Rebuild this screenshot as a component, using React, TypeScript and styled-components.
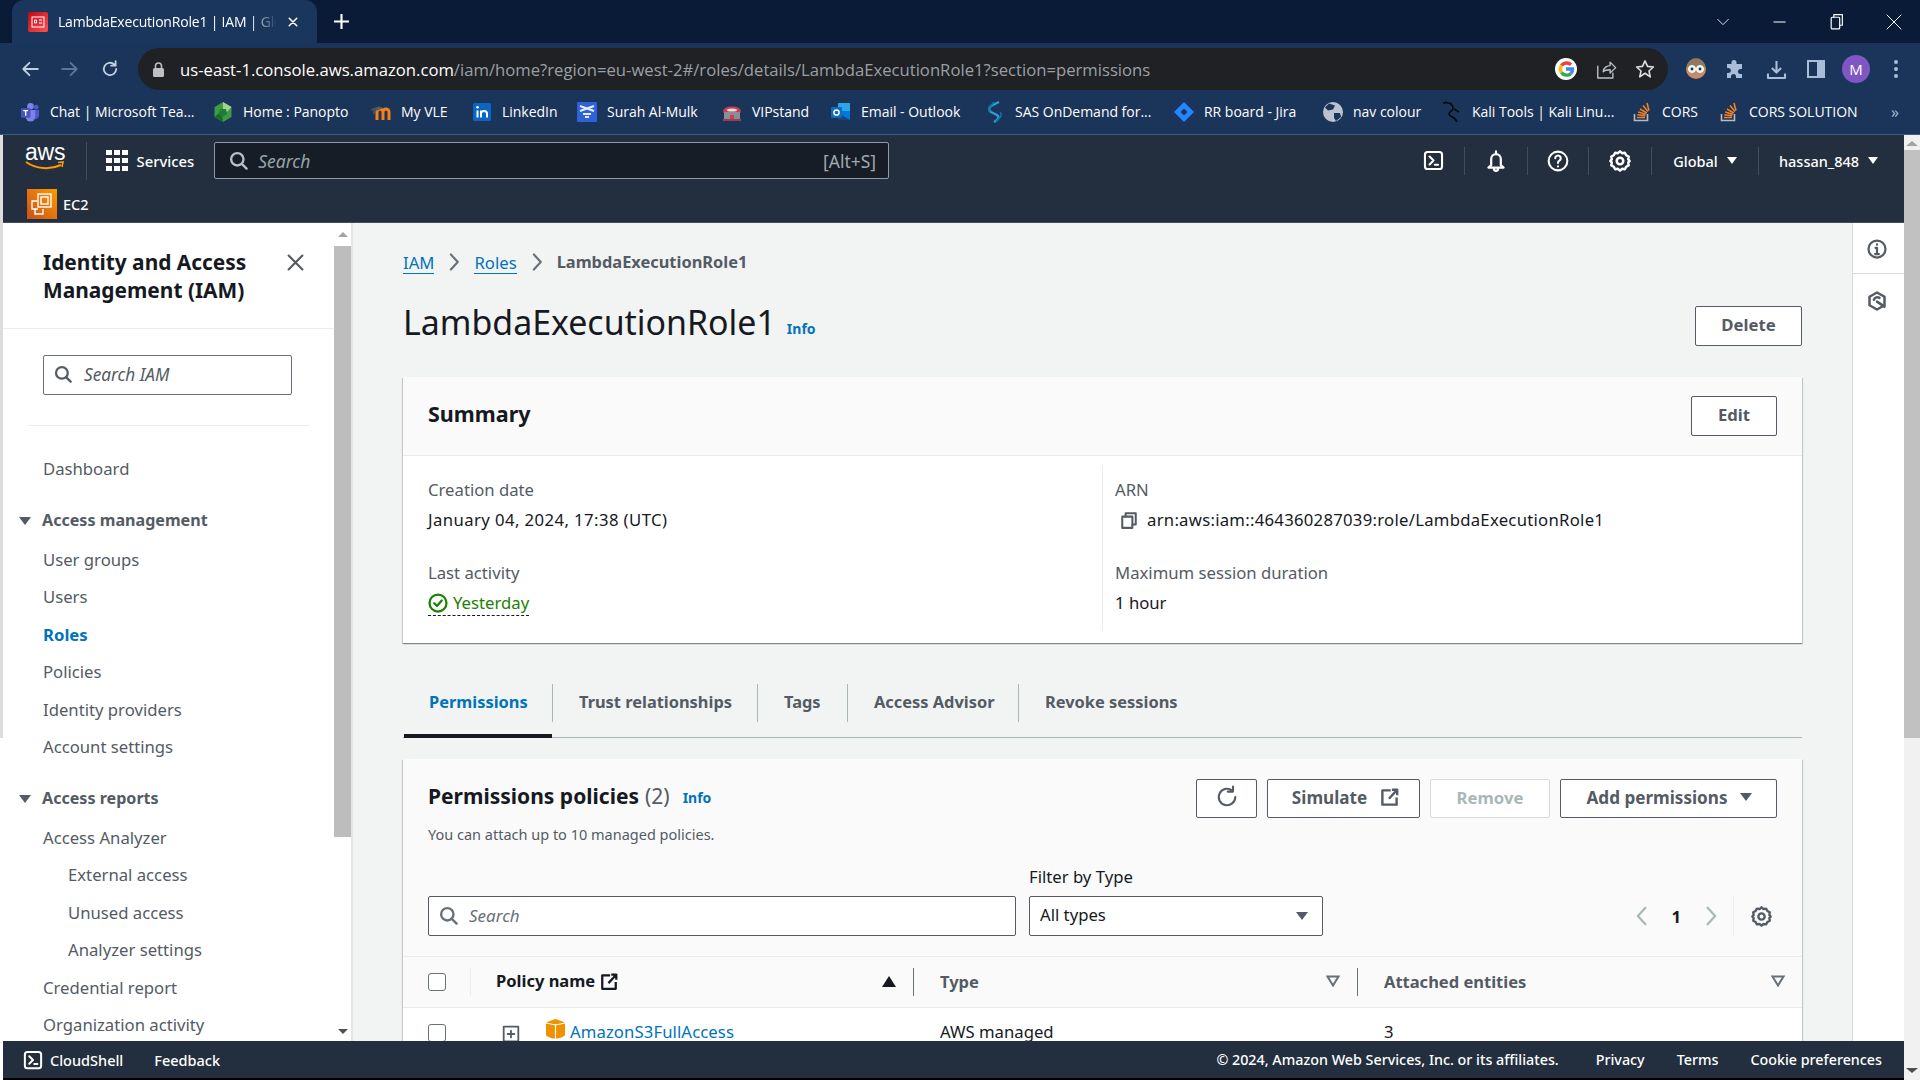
import React from 'react';
import styled, { createGlobalStyle } from 'styled-components';

const GlobalStyle = createGlobalStyle`
  html, body { margin: 0; padding: 0; height: 100%; overflow: hidden; background: #fff; }
  #root { height: 100%; }
  * { box-sizing: border-box; }
  body { font-family: "Noto Sans", "Open Sans", sans-serif; color: #16191f; }
`;

const chromeFont = `"Open Sans", "Noto Sans", sans-serif`;

const Screen = styled.div`
  display: flex;
  flex-direction: column;
  height: 1080px;
  width: 1920px;
  overflow: hidden;
`;

/* ---- browser chrome ---- */
const TabStrip = styled.div`
  height: 43px;
  flex: none;
  background: #0a1b37;
  display: flex;
  align-items: flex-end;
  padding-left: 12px;
  color: #fff;
  font-family: ${chromeFont};
`;
const BrowserTab = styled.div`
  width: 305px;
  height: 43px;
  background: #1a365d;
  border-radius: 12px 12px 0 0;
  display: flex;
  align-items: center;
  padding-left: 16px;
  font-size: 14px;
`;
const Favicon = styled.div`
  width: 20px;
  height: 20px;
  flex: none;
  border-radius: 2px;
  background: linear-gradient(135deg, #bd0816, #ff5252);
  display: flex;
  align-items: center;
  justify-content: center;
`;
const TabTitle = styled.span`
  margin-left: 10px;
  width: 219px;
  white-space: nowrap;
  overflow: hidden;
  letter-spacing: -0.2px;
  -webkit-mask-image: linear-gradient(90deg, #000 88%, transparent);
`;
const TabClose = styled.span`
  display: flex;
  margin-left: 10px;
`;
const NewTab = styled.span`
  display: flex;
  margin: 0 0 13px 16px;
`;
const WindowControls = styled.div`
  margin-left: auto;
  margin-right: -2px;
  display: flex;
  align-self: center;
  align-items: center;
`;
const WindowButton = styled.span`
  width: 57px;
  display: flex;
  justify-content: center;
`;
const Toolbar = styled.div`
  height: 50px;
  flex: none;
  background: #1a3559;
  display: flex;
  align-items: center;
  padding: 2px 0 0 10px;
`;
const NavButton = styled.span<{ $dim?: boolean }>`
  width: 40px;
  display: flex;
  justify-content: center;
  color: ${(p) => (p.$dim ? '#5b7596' : '#c3d0e3')};
`;
const AddressBar = styled.div`
  width: 1530px;
  height: 42px;
  margin-left: 8px;
  border-radius: 21px;
  background: #202124;
  display: flex;
  align-items: center;
  padding: 0 13px 0 15px;
  font-family: ${chromeFont};
  font-size: 16.68px;
  color: #9aa0a6;
`;
const Host = styled.span`
  color: #fff;
`;
const UrlText = styled.span`
  margin-left: 16px;
  white-space: nowrap;
`;
const AddressIcons = styled.div`
  margin-left: auto;
  display: flex;
  align-items: center;
  gap: 18px;
`;
const AddressGlyph = styled.span<{ $c: string }>`
  display: flex;
  color: ${(p) => p.$c};
`;
const ToolIcons = styled.div`
  display: flex;
  align-items: center;
  margin-left: 8px;
`;
const ToolIcon = styled.span`
  width: 40px;
  display: flex;
  justify-content: center;
  color: #a9bcd8;
`;
const Avatar = styled.span`
  width: 28px;
  height: 28px;
  border-radius: 50%;
  background: #7e57c2;
  color: #fff;
  font-size: 15px;
  font-family: ${chromeFont};
  display: flex;
  align-items: center;
  justify-content: center;
`;
const Bookmarks = styled.div`
  height: 42px;
  flex: none;
  background: #1a3559;
  border-bottom: 1px solid #3b5a85;
  display: flex;
  align-items: center;
  padding: 0 0 4px 20px;
  font-family: ${chromeFont};
  font-size: 14px;
  letter-spacing: -0.02px;
  color: #fff;
  white-space: nowrap;
`;
const Bookmark = styled.div<{ $w: number }>`
  width: ${(p) => p.$w}px;
  display: flex;
  align-items: center;
  gap: 10px;
  flex: none;
`;
const BookmarkMark = styled.span`
  width: 20px;
  height: 20px;
  flex: none;
  display: flex;
  align-items: center;
  justify-content: center;
`;
const MoreBookmarks = styled.span`
  color: #a9bcd8;
  font-size: 16px;
  margin-left: 26px;
`;

/* ---- page frame ---- */
const Viewport = styled.div`
  flex: 1;
  min-height: 0;
  display: flex;
`;
const LeftEdge = styled.div`
  width: 3px;
  flex: none;
  background: linear-gradient(#dcdcdc 0 603px, #fff 603px);
`;
const Page = styled.div`
  width: 1901px;
  flex: none;
  display: flex;
  flex-direction: column;
  background: #000;
`;
const PageScroll = styled.div`
  flex: 1;
  background: #f1f1f1;
  display: flex;
  flex-direction: column;
  align-items: center;
`;
const ScrollArrow = styled.span<{ $down?: boolean; $w?: number; $top?: number }>`
  flex: none;
  margin: ${(p) => (p.$down ? 'auto 0 7px' : `${p.$top ?? 6}px 0 0`)};
  border-left: ${(p) => p.$w ?? 5}px solid transparent;
  border-right: ${(p) => p.$w ?? 5}px solid transparent;
  ${(p) => (p.$down ? 'border-top: 5px solid #505050;' : 'border-bottom: 5px solid #a3a3a3;')}
`;
const PageThumb = styled.div`
  width: 100%;
  height: 588px;
  margin-top: 4px;
  background: #c1c1c1;
`;

/* ---- aws header ---- */
const AwsBar = styled.div`
  height: 50px;
  flex: none;
  background: #232f3e;
  display: flex;
  align-items: center;
  padding-top: 1px;
  color: #fff;
  font-size: 14.5px;
  font-weight: 500;
`;
const LogoBox = styled.div`
  width: 84px;
  height: 38px;
  padding-left: 22px;
  border-right: 1px solid #414d5c;
`;
const AwsWord = styled.span`
  display: block;
  font-family: "Liberation Sans", sans-serif;
  font-size: 23px;
  line-height: 24px;
  letter-spacing: -0.2px;
  color: #fff;
  margin-top: -2px;
`;
const Smile = styled.svg`
  display: block;
  margin-top: -4px;
`;
const ServicesButton = styled.div`
  display: flex;
  align-items: center;
  gap: 9px;
  margin-left: 19px;
  font-size: 14.8px;
`;
const DotGrid = styled.div`
  display: grid;
  grid-template-columns: repeat(3, 5.5px);
  gap: 2.5px;
  & > i { height: 5.5px; background: #fff; display: block; }
`;
const GlobalSearch = styled.div`
  width: 675px;
  height: 37px;
  margin-left: 20px;
  background: #161d26;
  border: 1px solid #8d99a8;
  border-radius: 2px;
  display: flex;
  align-items: center;
  padding: 0 12px 0 14px;
  color: #b6bec9;
`;
const SearchHint = styled.span`
  margin-left: 10px;
  font-style: italic;
  font-size: 17.5px;
  font-weight: 400;
  color: #95a5a6;
`;
const Shortcut = styled.span`
  margin-left: auto;
  font-size: 17.5px;
  font-weight: 400;
  color: #a0a8b2;
`;
const HeaderRight = styled.div`
  margin-left: auto;
  display: flex;
  align-items: center;
  padding-right: 6px;
`;
const HeaderCell = styled.div<{ $w: number; $last?: boolean }>`
  width: ${(p) => p.$w}px;
  height: 28px;
  display: flex;
  align-items: center;
  justify-content: center;
  gap: 9px;
  border-right: ${(p) => (p.$last ? 'none' : '1px solid #414d5c')};
`;
const Caret = styled.span<{ $c?: string; $s?: number }>`
  flex: none;
  display: inline-block;
  border-left: ${(p) => p.$s ?? 5}px solid transparent;
  border-right: ${(p) => p.$s ?? 5}px solid transparent;
  border-top: ${(p) => (p.$s ?? 5) + 2}px solid ${(p) => p.$c ?? '#fff'};
`;
const ServiceBar = styled.div`
  height: 38px;
  flex: none;
  background: #232f3e;
  display: flex;
  align-items: center;
  gap: 6px;
  padding: 1px 0 0 24px;
  color: #fff;
  font-size: 14.5px;
  font-weight: 500;
  border-bottom: 1px solid #414d5c;
`;
const Ec2Badge = styled.span`
  width: 30px;
  height: 30px;
  background: linear-gradient(45deg, #c8511b, #ff9900);
  display: flex;
  align-items: center;
  justify-content: center;
`;

/* ---- main area ---- */
const Body = styled.div`
  flex: 1;
  min-height: 0;
  display: flex;
  background: #f2f3f3;
`;
const Sidebar = styled.nav`
  width: 331px;
  flex: none;
  background: #fff;
  overflow: hidden;
`;
const SideHead = styled.div`
  height: 106px;
  padding: 25px 30px 0 40px;
  border-bottom: 1px solid #eaeded;
  display: flex;
  justify-content: space-between;
  align-items: flex-start;
`;
const SideTitle = styled.h2`
  margin: 0;
  font-size: 20.9px;
  line-height: 28px;
  font-weight: 700;
  color: #16191f;
`;
const CloseButton = styled.span`
  display: flex;
  color: #545b64;
  margin-top: 6px;
`;
const SideSearchWrap = styled.div`
  padding: 26px 40px 30px 40px;
  margin: 0 25px 0 0;
`;
const SideSearch = styled.div`
  width: 249px;
  height: 40px;
  border: 1px solid #687078;
  border-radius: 2px;
  display: flex;
  align-items: center;
  gap: 12px;
  padding: 0 0 2px 10px;
  font-size: 17.2px;
  font-style: italic;
  color: #545b64;
`;
const SideRule = styled.div`
  height: 1px;
  margin: 0 25px;
  background: #eaeded;
`;
const SideList = styled.div`
  padding-top: 24px;
`;
const SideItem = styled.div<{ $level?: number; $active?: boolean }>`
  height: 37.5px;
  line-height: 37.5px;
  padding-left: ${(p) => (p.$level === 2 ? 65 : 40)}px;
  font-size: 16.7px;
  white-space: nowrap;
  color: ${(p) => (p.$active ? '#0073bb' : '#545b64')};
  font-weight: ${(p) => (p.$active ? 700 : 400)};
`;
const SideSection = styled.div<{ $mt?: number; $h?: number }>`
  height: ${(p) => p.$h ?? 39}px;
  margin-top: ${(p) => p.$mt ?? 14}px;
  padding: 0 0 1px 16px;
  display: flex;
  align-items: center;
  gap: 11px;
  font-size: 16.1px;
  font-weight: 700;
  color: #545b64;
  line-height: 37.5px;
`;
const SideScroll = styled.div`
  width: 19px;
  flex: none;
  background: #fff;
  border-right: 2px solid #e4e6e6;
  display: flex;
  flex-direction: column;
  align-items: center;
`;
const SideThumb = styled.div`
  width: 17px;
  height: 591px;
  margin-top: 9px;
  background: #bdbdbd;
`;
const Main = styled.main`
  flex: 1;
  min-width: 0;
  overflow: hidden;
  padding: 28px 50px 0;
`;
const Crumbs = styled.div`
  height: 22px;
  display: flex;
  align-items: center;
  font-size: 16.7px;
  line-height: 22px;
  color: #545b64;
`;
const CrumbLink = styled.a`
  color: #0073bb;
  border-bottom: 1px solid #0073bb;
  line-height: 21px;
  margin-top: 1px;
`;
const CrumbSep = styled.span`
  display: flex;
  margin: 0 10px;
  color: #687078;
`;
const CrumbCurrent = styled.span`
  font-weight: 700;
  font-size: 16.4px;
`;
const TitleRow = styled.div`
  height: 40px;
  margin-top: 33px;
  display: flex;
  align-items: flex-start;
`;
const PageTitle = styled.h1`
  margin: -4px 0 0;
  font-size: 33.9px;
  line-height: 40px;
  font-weight: 400;
  color: #16191f;
`;
const InfoLink = styled.a<{ $top: number; $ml?: number }>`
  margin: ${(p) => p.$top}px 0 0 ${(p) => p.$ml ?? 11}px;
  font-size: 14px;
  font-weight: 700;
  line-height: 18px;
  color: #0073bb;
`;
const Button = styled.div<{ $w: number; $h?: number; $off?: boolean; $fs?: number; $pl?: number }>`
  width: ${(p) => p.$w}px;
  height: ${(p) => p.$h ?? 40}px;
  flex: none;
  background: #fff;
  border: 1px solid ${(p) => (p.$off ? '#d5dbdb' : '#545b64')};
  border-radius: 2px;
  display: flex;
  align-items: center;
  justify-content: center;
  gap: 13px;
  padding: 0 0 3px ${(p) => p.$pl ?? 0}px;
  font-size: ${(p) => p.$fs ?? 16.7}px;
  font-weight: 700;
  color: ${(p) => (p.$off ? '#aab7b8' : '#545b64')};
`;
const PushRight = styled.div`
  margin-left: auto;
`;
const Card = styled.section<{ $mt: number }>`
  margin-top: ${(p) => p.$mt}px;
  background: #fff;
  box-shadow: 0 1px 1px 0 rgba(0, 28, 36, 0.3), 1px 1px 1px 0 rgba(0, 28, 36, 0.15), -1px 1px 1px 0 rgba(0, 28, 36, 0.15);
`;
const SummaryHead = styled.div`
  height: 79px;
  background: #fafafa;
  border-bottom: 1px solid #eaeded;
  padding: 0 25px;
  display: flex;
  align-items: center;
  justify-content: space-between;
`;
const CardTitle = styled.h2<{ $mt: number; $fs?: number }>`
  margin: ${(p) => p.$mt}px 0 0;
  font-size: ${(p) => p.$fs ?? 21}px;
  font-weight: 700;
  line-height: 28px;
  color: #16191f;
`;
const SummaryGrid = styled.div`
  height: 187px;
  padding: 9px 0 12px;
  display: grid;
  grid-template-columns: 699px 1fr;
`;
const SummaryColumn = styled.div<{ $ruled?: boolean }>`
  padding: 14px 0 0 ${(p) => (p.$ruled ? 12 : 25)}px;
  border-left: ${(p) => (p.$ruled ? '1px solid #eaeded' : 'none')};
`;
const FieldLabel = styled.div<{ $mt?: number }>`
  margin-top: ${(p) => p.$mt ?? 0}px;
  font-size: 16.7px;
  line-height: 22px;
  color: #545b64;
`;
const FieldValue = styled.div<{ $track?: number }>`
  margin-top: 8px;
  font-size: 16.7px;
  line-height: 22px;
  letter-spacing: ${(p) => p.$track ?? 0}px;
  color: #16191f;
  display: flex;
  align-items: center;
`;
const StatusOk = styled.span`
  display: inline-flex;
  align-items: center;
  gap: 5px;
  height: 25px;
  margin-top: -1px;
  border-bottom: 1.5px dashed #16191f;
  color: #1d8102;
`;
const CopyMark = styled.span`
  display: flex;
  margin: 0 9px 0 5px;
  color: #545b64;
`;
const TabList = styled.div`
  margin-top: 41px;
  height: 54px;
  padding-left: 1px;
  display: flex;
  border-bottom: 1px solid #aab7b8;
  align-items: flex-start;
`;
const TabButton = styled.div<{ $active?: boolean; $last?: boolean; $w: number }>`
  width: ${(p) => p.$w}px;
  height: ${(p) => (p.$active ? 54 : 38)}px;
  flex: none;
  padding-left: ${(p) => (p.$active ? 25 : 26)}px;
  line-height: 36px;
  font-size: 16.4px;
  font-weight: 700;
  white-space: nowrap;
  color: ${(p) => (p.$active ? '#0073bb' : '#545b64')};
  border-right: ${(p) => (p.$last || p.$active ? 'none' : '1px solid #aab7b8')};
  border-bottom: ${(p) => (p.$active ? '4px solid #16191f' : 'none')};
`;
const TabRule = styled.span`
  width: 1px;
  height: 38px;
  flex: none;
  background: #aab7b8;
`;
const PolicyCard = styled(Card)`
  background: #fafafa;
`;
const PolicyHead = styled.div`
  padding: 20px 25px 20px;
  border-bottom: 1px solid #eaeded;
`;
const HeadTop = styled.div`
  display: flex;
  align-items: flex-start;
  height: 39px;
`;
const Count = styled.span`
  font-weight: 400;
  color: #545b64;
  margin-left: 6px;
`;
const ButtonRow = styled.div`
  margin-left: auto;
  display: flex;
  gap: 10px;
`;
const Description = styled.div`
  margin-top: 6px;
  font-size: 14.5px;
  line-height: 20px;
  color: #545b64;
`;
const FilterRow = styled.div`
  margin-top: 22px;
  display: flex;
  align-items: flex-end;
`;
const PolicySearch = styled.div`
  width: 588px;
  height: 40px;
  background: #fff;
  border: 1px solid #545b64;
  border-radius: 2px;
  display: flex;
  align-items: center;
  gap: 11px;
  padding: 0 0 1px 10px;
  font-size: 17px;
  font-style: italic;
  color: #687078;
`;
const FilterField = styled.div`
  width: 294px;
  margin-left: 13px;
`;
const FilterLabel = styled.div`
  font-size: 16.7px;
  line-height: 22px;
  margin-bottom: 8px;
  color: #16191f;
`;
const SelectBox = styled.div`
  height: 40px;
  background: #fff;
  border: 1px solid #545b64;
  border-radius: 2px;
  display: flex;
  align-items: center;
  justify-content: space-between;
  padding: 0 14px 3px 10px;
  font-size: 16.7px;
  color: #16191f;
`;
const SelectCaret = styled(Caret)`
  margin-top: 3px;
`;
const Pager = styled.div`
  margin-left: auto;
  height: 40px;
  padding-right: 5px;
  display: flex;
  align-items: center;
  color: #16191f;
  font-size: 16.7px;
  font-weight: 700;
`;
const PagerChevron = styled.span`
  display: flex;
  color: #aab7b8;
`;
const PagerNumber = styled.span`
  margin: 0 19px 0 18px;
`;
const PagerDivider = styled.span`
  width: 1px;
  height: 40px;
  margin: 0 17px 0 11px;
  background: #eaeded;
`;
const PagerGear = styled.span`
  display: flex;
  color: #545b64;
`;
const tableColumns = '67px 443px 444px 1fr';
const TableHead = styled.div`
  height: 51px;
  display: grid;
  grid-template-columns: ${tableColumns};
  align-items: center;
  border-bottom: 1px solid #eaeded;
`;
const CheckCell = styled.div`
  padding-left: 25px;
  display: flex;
  align-items: center;
`;
const RowCheckCell = styled(CheckCell)`
  padding-top: 3px;
`;
const CheckBox = styled.span`
  width: 18px;
  height: 18px;
  display: block;
  background: #fff;
  border: 1px solid #687078;
  border-radius: 3px;
`;
const HeadCell = styled.div<{ $soft?: boolean }>`
  height: 28px;
  display: flex;
  align-items: center;
  padding: 0 17px 2px ${(p) => (p.$soft ? 25 : 26)}px;
  border-left: 1px solid ${(p) => (p.$soft ? '#eaeded' : '#687078')};
  font-size: 16.5px;
  font-weight: 700;
  color: #545b64;
`;
const HeadName = styled.span`
  color: #16191f;
  margin-top: -1px;
`;
const HeadExt = styled.span`
  display: flex;
  margin: 1px 0 0 5px;
  color: #16191f;
`;
const SortMark = styled.span`
  margin-left: auto;
  display: flex;
`;
const TableRow = styled.div`
  display: grid;
  grid-template-columns: ${tableColumns};
  background: #fff;
  height: 60px;
  padding-top: 13px;
  align-items: flex-start;
  font-size: 16.7px;
  line-height: 22px;
`;
const RowCell = styled.div<{ $pad?: number }>`
  padding-left: ${(p) => p.$pad ?? 27}px;
  display: flex;
  align-items: center;
  color: #16191f;
`;
const RowLink = styled.a`
  color: #0073bb;
  margin-left: 5px;
  letter-spacing: 0.1px;
`;
const ExpandMark = styled.span`
  display: flex;
  margin: 4px 26px 0 0;
  color: #545b64;
`;
const S3Mark = styled.span`
  display: flex;
  margin-top: -6px;
`;
const RightRail = styled.aside`
  width: 52px;
  flex: none;
  background: #fff;
  border-left: 1px solid #d5dbdb;
`;
const RailButton = styled.div<{ $ruled?: boolean }>`
  height: 51px;
  display: flex;
  align-items: center;
  justify-content: center;
  padding: 2px 3px 0 0;
  color: #545b64;
  border-bottom: ${(p) => (p.$ruled ? '1px solid #d5dbdb' : 'none')};
`;
const Footer = styled.footer`
  height: 37px;
  flex: none;
  background: #232f3e;
  display: flex;
  align-items: center;
  padding: 0 22px 0 20px;
  color: #fff;
  font-size: 14.5px;
  font-weight: 500;
  white-space: nowrap;
`;
const FooterShell = styled.span`
  display: flex;
  align-items: center;
  gap: 7px;
`;
const FooterLink = styled.span<{ $ml: number }>`
  margin-left: ${(p) => p.$ml}px;
`;
const FooterEnd = styled.div`
  margin-left: auto;
  display: flex;
  font-size: 14.3px;
`;
const BottomLine = styled.div`
  height: 2px;
  flex: none;
  background: #000;
`;

/* ---- drawings ---- */
const Ico: React.FC<{ s?: number; sw?: number; children: React.ReactNode; vb?: string }> = ({ s = 16, sw = 2, children, vb = '0 0 16 16' }) => (
  <svg width={s} height={s} viewBox={vb} fill="none" stroke="currentColor" strokeWidth={sw} strokeLinecap="round" strokeLinejoin="round">
    {children}
  </svg>
);
const SearchIcon = ({ s = 18 }: { s?: number }) => (
  <Ico s={s}><circle cx="7" cy="7" r="5.2" /><path d="M11 11l3.8 3.8" /></Ico>
);
const ExternalIcon = ({ s = 19 }: { s?: number }) => (
  <Ico s={s}><path d="M9 2H2v12h12V8" strokeLinecap="butt" /><path d="M10 1.5h4.5V6M14 2L7.5 9" strokeLinecap="butt" /></Ico>
);
const GearIcon = ({ s = 20 }: { s?: number }) => (
  <Ico s={s} sw={1.8}>
    <path d="M8 1l1.5 1.3 2-.3 1 1.8 1.8 1-.3 2L15 8l-1 1.2.3 2-1.8 1-1 1.8-2-.3L8 15l-1.5-1.3-2 .3-1-1.8-1.8-1 .3-2L1 8l1-1.2-.3-2 1.8-1 1-1.8 2 .3z" />
    <circle cx="8" cy="8" r="2.4" />
  </Ico>
);
const ShellIcon = ({ s = 20 }: { s?: number }) => (
  <Ico s={s} sw={1.6}><rect x="1.5" y="1.5" width="13" height="13" rx="2" /><path d="M5 5l3 3-3 3M9 11.2h2.5" /></Ico>
);
const Chevron = ({ left, s = 18, sw = 1.6 }: { left?: boolean; s?: number; sw?: number }) => (
  <Ico s={s} sw={sw}><path d={left ? 'M10.5 2L5 8l5.5 6' : 'M5.5 2L11 8l-5.5 6'} /></Ico>
);
const S3Icon = () => (
  <svg width="19" height="20" viewBox="0 0 19 20">
    <path d="M0 4.5C0 3 5 1.5 9.5 0 14 1.5 19 3 19 4.5v11c0 2-5 3.5-9.5 4.5C5 19 0 17.5 0 15.5z" fill="#f29100" />
    <path d="M9.5 5v15M0 4l9.5 2L19 4" stroke="#fff" strokeWidth="1.2" fill="none" />
  </svg>
);
const FilterTriangle = () => (
  <svg width="14" height="12" viewBox="0 0 14 12"><path d="M1.5 1.5h11L7 10.5z" fill="none" stroke="#687078" strokeWidth="2" /></svg>
);

const marks: Record<string, React.ReactNode> = {
  teams: (
    <svg width="21" height="20" viewBox="0 0 21 20">
      <circle cx="11" cy="4" r="3.5" fill="#7b83eb" /><circle cx="17" cy="5" r="2.5" fill="#5059c9" />
      <path d="M13 8h7v6a4 4 0 0 1-7 2z" fill="#5059c9" /><path d="M6 8h10v7a5 5 0 0 1-10 0z" fill="#7b83eb" />
      <rect x="1" y="6" width="10" height="10" rx="1" fill="#4b53bc" /><path d="M3.5 8.5h5M6 8.5v5.5" stroke="#fff" strokeWidth="1.4" />
    </svg>
  ),
  panopto: (
    <svg width="20" height="20" viewBox="0 0 20 20">
      <path d="M10 0l8.5 5v10L10 20l-8.5-5V5z" fill="#3d9a45" /><path d="M10 0l8.5 5-4.5 5-4-3z" fill="#9ed28f" />
      <path d="M1.5 15L7 10l3 7 0 3z" fill="#1d6b2c" /><path d="M7 7h6l1 5-4 3-4-3z" fill="#1f7d35" />
    </svg>
  ),
  moodle: (
    <svg width="20" height="16" viewBox="0 0 20 16">
      <path d="M6 16V8a3 3 0 0 1 6 0v8M12 16V8a3 3 0 0 1 6 0v8" stroke="#f98012" strokeWidth="3" fill="none" />
      <path d="M0 6l8-3 2 1-7 3v3" stroke="#55595c" strokeWidth="1.5" fill="none" />
    </svg>
  ),
  linkedin: (
    <svg width="18" height="18" viewBox="0 0 18 18">
      <rect width="18" height="18" rx="1.5" fill="#0a66c2" />
      <path d="M4.5 7.5v7M8 14.5v-7M8 10.5c0-3.5 6-3.5 6 0v4" stroke="#fff" strokeWidth="2" fill="none" /><circle cx="4.5" cy="4.3" r="1.3" fill="#fff" />
    </svg>
  ),
  surah: (
    <svg width="20" height="20" viewBox="0 0 20 20">
      <rect width="20" height="20" rx="1" fill="#2e62d9" />
      <path d="M3 4l14 5M17 4L3 9M6 12h8M8 15h4" stroke="#e4edff" strokeWidth="2" />
    </svg>
  ),
  vip: (
    <svg width="20" height="20" viewBox="0 0 20 20">
      <ellipse cx="10" cy="9" rx="9" ry="4.5" fill="#c7404d" /><ellipse cx="10" cy="8" rx="5" ry="1.6" fill="#e9e2e2" />
      <path d="M2 10v7h16v-7" fill="#8d8d97" /><path d="M8 13h4v4H8z" fill="#c7404d" /><path d="M1 18h18" stroke="#c7404d" strokeWidth="1.5" />
    </svg>
  ),
  outlook: (
    <svg width="20" height="20" viewBox="0 0 20 20">
      <rect x="7" y="1" width="12" height="10" fill="#28a8ea" /><path d="M7 9l12 0v9H7z" fill="#0078d4" /><path d="M7 11l12 7H7z" fill="#14447d" />
      <rect x="0" y="5" width="11" height="11" rx="1" fill="#0f6cbd" /><circle cx="5.5" cy="10.5" r="2.6" fill="none" stroke="#fff" strokeWidth="1.5" />
    </svg>
  ),
  sas: (
    <svg width="18" height="22" viewBox="0 0 18 22">
      <path d="M13 1L5 5c-3 2-2 5 0 6l6 3c3 2 1 5-3 7" fill="none" stroke="#2a9fd8" strokeWidth="2.4" />
      <path d="M8 1L3 7c-1 2 0 3 1 4M10 21l5-6c1-2 0-3-1-4" fill="none" stroke="#1272ae" strokeWidth="1.6" />
    </svg>
  ),
  jira: (
    <svg width="20" height="20" viewBox="0 0 20 20">
      <path d="M10 0l10 10-10 10L0 10z" fill="#2684ff" /><path d="M10 6.5l3.5 3.5-3.5 3.5L6.5 10z" fill="#1a3559" />
    </svg>
  ),
  globe: (
    <svg width="20" height="20" viewBox="0 0 20 20">
      <circle cx="10" cy="10" r="10" fill="#bcc3cf" />
      <path d="M6 1.5l6 2-2 4-5 1-3-3zM11 11l6 0 1 4-5 4-2-3z" fill="#1a3559" />
    </svg>
  ),
  kali: (
    <svg width="20" height="22" viewBox="0 0 20 22">
      <path d="M1 2c6-1 10 1 10 5 0 4-4 3-4 6 0 3 6 2 8 8M3 1l7 2M12 8l5 3" fill="none" stroke="#06090f" strokeWidth="1.6" />
    </svg>
  ),
  stack: (
    <svg width="18" height="20" viewBox="0 0 18 20">
      <path d="M1.5 12v6.5h13V12" fill="none" stroke="#bcbbbb" strokeWidth="1.6" />
      <path d="M4 15.5h8M4.3 12.8l8 1M5.2 10l7.6 2.2M7 7l6.8 4M10 3.6l5 6M14 1l2 7.5" stroke="#f48024" strokeWidth="1.6" />
    </svg>
  ),
};

const bookmarkList: [string, string, number][] = [
  ['teams', 'Chat | Microsoft Tea...', 193],
  ['panopto', 'Home : Panopto', 158],
  ['moodle', 'My VLE', 101],
  ['linkedin', 'LinkedIn', 105],
  ['surah', 'Surah Al-Mulk', 145],
  ['vip', 'VIPstand', 109],
  ['outlook', 'Email - Outlook', 154],
  ['sas', 'SAS OnDemand for...', 189],
  ['jira', 'RR board - Jira', 149],
  ['globe', 'nav colour', 119],
  ['kali', 'Kali Tools | Kali Linu...', 190],
  ['stack', 'CORS', 87],
  ['stack', 'CORS SOLUTION', 146],
];

const accessManagement = ['User groups', 'Users', 'Roles', 'Policies', 'Identity providers', 'Account settings'];

const App = () => (
  <Screen>
    <GlobalStyle />
    <TabStrip>
      <BrowserTab>
        <Favicon>
          <svg width="14" height="14" viewBox="0 0 14 14" fill="none" stroke="#fff" strokeWidth="1"><rect x="1" y="2" width="12" height="10" /><path d="M3.5 5h2v3h-2zM8 5h3M8 8h3" /></svg>
        </Favicon>
        <TabTitle>LambdaExecutionRole1 | IAM | Global</TabTitle>
        <TabClose><Ico s={12} sw={2}><path d="M3 3l10 10M13 3L3 13" /></Ico></TabClose>
      </BrowserTab>
      <NewTab><Ico s={17} sw={2}><path d="M8 1v14M1 8h14" strokeLinecap="butt" /></Ico></NewTab>
      <WindowControls>
        <WindowButton><Ico s={14} sw={1}><path d="M2 5l6 6 6-6" /></Ico></WindowButton>
        <WindowButton><Ico s={14} sw={1.2}><path d="M1 8h13" /></Ico></WindowButton>
        <WindowButton><Ico s={17} sw={1.1}><rect x="3" y="4" width="8" height="11" rx="1" /><path d="M5.5 4V1.5h8v10H11" /></Ico></WindowButton>
        <WindowButton><Ico s={16} sw={1}><path d="M1 1l14 14M15 1L1 15" /></Ico></WindowButton>
      </WindowControls>
    </TabStrip>

    <Toolbar>
      <NavButton><Ico s={18} sw={1.6}><path d="M15 8H2M7.5 2.5L2 8l5.5 5.5" /></Ico></NavButton>
      <NavButton $dim><Ico s={18} sw={1.6}><path d="M1 8h13M8.5 2.5L14 8l-5.5 5.5" /></Ico></NavButton>
      <NavButton><Ico s={18} sw={1.6}><path d="M13.5 8a5.5 5.5 0 1 1-1.7-4M13 1v4H9" /></Ico></NavButton>
      <AddressBar>
        <svg width="11" height="15" viewBox="0 0 11 15"><rect y="6" width="11" height="9" rx="1.5" fill="#bdc1c6" /><path d="M2.5 6V4a3 3 0 0 1 6 0v2" stroke="#bdc1c6" strokeWidth="1.5" fill="none" /></svg>
        <UrlText><Host>us-east-1.console.aws.amazon.com</Host>/iam/home?region=eu-west-2#/roles/details/LambdaExecutionRole1?section=permissions</UrlText>
        <AddressIcons>
          <svg width="22" height="22" viewBox="0 0 22 22" fill="none" strokeWidth="3.4">
            <circle cx="11" cy="11" r="11" fill="#fff" />
            <path d="M16 6.8A6.4 6.4 0 0 0 6.4 7.6" stroke="#ea4335" />
            <path d="M6.4 7.6a6.4 6.4 0 0 0 0 6.8" stroke="#fbbc05" />
            <path d="M6.4 14.4a6.4 6.4 0 0 0 9.6 1" stroke="#34a853" />
            <path d="M16 15.4a6 6 0 0 0 1.4-4.4H11" stroke="#4285f4" />
          </svg>
          <AddressGlyph $c="#bdc1c6">
            <Ico s={22} sw={1}><path d="M2 6v8.5h11V11M6 10c0-3 3-4.5 5-4.5V3l4 4-4 4V8.5c-2 0-4 .3-5 1.5z" /></Ico>
          </AddressGlyph>
          <AddressGlyph $c="#dadce0">
            <Ico s={20} sw={1.3}><path d="M8 1.5l2 4.4 4.7.5-3.5 3.2 1 4.7L8 11.4l-4.2 2.9 1-4.7L1.3 6.4 6 5.9z" /></Ico>
          </AddressGlyph>
        </AddressIcons>
      </AddressBar>
      <ToolIcons>
        <ToolIcon>
          <svg width="22" height="22" viewBox="0 0 22 22">
            <circle cx="11" cy="11" r="10" fill="#c98a64" /><path d="M2 9a9 9 0 0 1 18 0z" fill="#8f7a5c" />
            <circle cx="7" cy="11" r="3.5" fill="#dff3f3" stroke="#fff" /><circle cx="15" cy="11" r="3.5" fill="#dff3f3" stroke="#fff" />
            <circle cx="7" cy="11" r="1.4" fill="#234" /><circle cx="15" cy="11" r="1.4" fill="#234" />
          </svg>
        </ToolIcon>
        <ToolIcon>
          <svg width="20" height="20" viewBox="0 0 20 20" fill="currentColor"><path d="M8 1a2.5 2.5 0 0 1 2.5 2.5V5H16v5h-1.5a2.5 2.5 0 0 0 0 5H16v4H10v-1.5a2.5 2.5 0 0 0-5 0V19H1v-5h1.5a2.5 2.5 0 0 0 0-5H1V5h4.5V3.500A2.5 2.5 0 0 1 8 1z" /></svg>
        </ToolIcon>
        <ToolIcon><Ico s={21} sw={1.6}><path d="M8 1.5V10M4.5 6.8L8 10.3l3.5-3.5M1.5 11v3.5h13V11" strokeLinecap="butt" /></Ico></ToolIcon>
        <ToolIcon>
          <svg width="18" height="18" viewBox="0 0 18 18" fill="currentColor"><path d="M0 0h18v18H0zM2 2v14h8V2z" fillRule="evenodd" /></svg>
        </ToolIcon>
        <ToolIcon><Avatar>M</Avatar></ToolIcon>
        <ToolIcon><svg width="4" height="18" viewBox="0 0 4 18" fill="currentColor"><circle cx="2" cy="2" r="2" /><circle cx="2" cy="9" r="2" /><circle cx="2" cy="16" r="2" /></svg></ToolIcon>
      </ToolIcons>
    </Toolbar>

    <Bookmarks>
      {bookmarkList.map(([mark, label, w], i) => (
        <Bookmark key={i} $w={w}>
          <BookmarkMark>{marks[mark]}</BookmarkMark>
          <span>{label}</span>
        </Bookmark>
      ))}
      <MoreBookmarks>»</MoreBookmarks>
    </Bookmarks>

    <Viewport>
      <LeftEdge />
      <Page>
        <AwsBar>
          <LogoBox>
            <AwsWord>aws</AwsWord>
            <Smile width="40" height="11" viewBox="0 0 40 11" fill="none">
              <path d="M1 2c10 7 24 8 35 3" stroke="#ff9900" strokeWidth="2" />
              <path d="M33 2.5l5-.5-1 5" stroke="#ff9900" strokeWidth="1.6" />
            </Smile>
          </LogoBox>
          <ServicesButton>
            <DotGrid>{Array.from({ length: 9 }, (_, i) => <i key={i} />)}</DotGrid>
            Services
          </ServicesButton>
          <GlobalSearch>
            <SearchIcon s={19} />
            <SearchHint>Search</SearchHint>
            <Shortcut>[Alt+S]</Shortcut>
          </GlobalSearch>
          <HeaderRight>
            <HeaderCell $w={62}><ShellIcon s={21} /></HeaderCell>
            <HeaderCell $w={63}>
              <Ico s={22} sw={1.6}><path d="M8 1v1.5M4.5 11V6.5a3.5 3.5 0 0 1 7 0V11l2 1.8H2.500zM6.5 13v.7a1.5 1.5 0 0 0 3 0V13" /></Ico>
            </HeaderCell>
            <HeaderCell $w={61}>
              <Ico s={22} sw={1.5}><circle cx="8" cy="8" r="6.8" /><path d="M6 6a2 2 0 1 1 3 1.8c-.7.4-1 .8-1 1.7" /><path d="M8 11.8v.2" /></Ico>
            </HeaderCell>
            <HeaderCell $w={63}><GearIcon s={22} /></HeaderCell>
            <HeaderCell $w={107}>Global <Caret /></HeaderCell>
            <HeaderCell $w={139} $last>hassan_848 <Caret /></HeaderCell>
          </HeaderRight>
        </AwsBar>
        <ServiceBar>
          <Ec2Badge>
            <svg width="24" height="24" viewBox="0 0 24 24" fill="none" stroke="#fff" strokeWidth="1.4">
              <path d="M8 17H2V9h5M13 17v5H5v-5" /><rect x="8" y="2" width="13" height="13" /><rect x="11" y="5" width="7" height="7" />
            </svg>
          </Ec2Badge>
          EC2
        </ServiceBar>

        <Body>
          <Sidebar>
            <SideHead>
              <SideTitle>Identity and Access<br />Management (IAM)</SideTitle>
              <CloseButton><Ico s={17} sw={2}><path d="M1.5 1.5l13 13M14.5 1.5l-13 13" /></Ico></CloseButton>
            </SideHead>
            <SideSearchWrap>
              <SideSearch><SearchIcon s={18} />Search IAM</SideSearch>
            </SideSearchWrap>
            <SideRule />
            <SideList>
              <SideItem>Dashboard</SideItem>
              <SideSection><Caret $c="#545b64" $s={6} />Access management</SideSection>
              {accessManagement.map((item) => (
                <SideItem key={item} $active={item === 'Roles'}>{item}</SideItem>
              ))}
              <SideSection $mt={15} $h={38}><Caret $c="#545b64" $s={6} />Access reports</SideSection>
              <SideItem>Access Analyzer</SideItem>
              <SideItem $level={2}>External access</SideItem>
              <SideItem $level={2}>Unused access</SideItem>
              <SideItem $level={2}>Analyzer settings</SideItem>
              <SideItem>Credential report</SideItem>
              <SideItem>Organization activity</SideItem>
            </SideList>
          </Sidebar>
          <SideScroll>
            <ScrollArrow $top={9} />
            <SideThumb />
            <ScrollArrow $down />
          </SideScroll>

          <Main>
            <Crumbs>
              <CrumbLink>IAM</CrumbLink>
              <CrumbSep><Chevron s={20} sw={1.7} /></CrumbSep>
              <CrumbLink>Roles</CrumbLink>
              <CrumbSep><Chevron s={20} sw={1.7} /></CrumbSep>
              <CrumbCurrent>LambdaExecutionRole1</CrumbCurrent>
            </Crumbs>
            <TitleRow>
              <PageTitle>LambdaExecutionRole1</PageTitle>
              <InfoLink $top={14}>Info</InfoLink>
              <PushRight><Button $w={107}>Delete</Button></PushRight>
            </TitleRow>

            <Card $mt={31}>
              <SummaryHead>
                <CardTitle $mt={-4} $fs={21.5}>Summary</CardTitle>
                <Button $w={86}>Edit</Button>
              </SummaryHead>
              <SummaryGrid>
                <SummaryColumn>
                  <FieldLabel>Creation date</FieldLabel>
                  <FieldValue $track={0.42}>January 04, 2024, 17:38 (UTC)</FieldValue>
                  <FieldLabel $mt={31}>Last activity</FieldLabel>
                  <FieldValue>
                    <StatusOk>
                      <Ico s={20} sw={1.8}><circle cx="8" cy="8" r="6.8" /><path d="M5 8.2l2.2 2.2L11 6" /></Ico>
                      Yesterday
                    </StatusOk>
                  </FieldValue>
                </SummaryColumn>
                <SummaryColumn $ruled>
                  <FieldLabel>ARN</FieldLabel>
                  <FieldValue $track={0.27}>
                    <CopyMark><Ico s={18} sw={1.8}><rect x="2" y="5" width="9" height="10" /><path d="M5 5V2h9v10h-3" /></Ico></CopyMark>
                    arn:aws:iam::464360287039:role/LambdaExecutionRole1
                  </FieldValue>
                  <FieldLabel $mt={31}>Maximum session duration</FieldLabel>
                  <FieldValue>1 hour</FieldValue>
                </SummaryColumn>
              </SummaryGrid>
            </Card>

            <TabList>
              <TabButton $active $w={148}>Permissions</TabButton>
              <TabRule />
              <TabButton $w={205}>Trust relationships</TabButton>
              <TabButton $w={90}>Tags</TabButton>
              <TabButton $w={171}>Access Advisor</TabButton>
              <TabButton $last $w={170}>Revoke sessions</TabButton>
            </TabList>

            <PolicyCard $mt={21}>
              <PolicyHead>
                <HeadTop>
                  <CardTitle $mt={3}>Permissions policies<Count>(2)</Count></CardTitle>
                  <InfoLink $top={10} $ml={13}>Info</InfoLink>
                  <ButtonRow>
                    <Button $w={61} $h={39}><Ico s={24} sw={1.4}><path d="M13.5 8a5.5 5.5 0 1 1-2.2-4.4M12 1v3.4H8.5" /></Ico></Button>
                    <Button $w={153} $h={39} $pl={4} $fs={17.1}>Simulate <ExternalIcon /></Button>
                    <Button $w={120} $h={39} $off>Remove</Button>
                    <Button $w={217} $h={39} $pl={2} $fs={17.1}>Add permissions <Caret $c="#545b64" $s={6} /></Button>
                  </ButtonRow>
                </HeadTop>
                <Description>You can attach up to 10 managed policies.</Description>
                <FilterRow>
                  <PolicySearch><SearchIcon s={19} />Search</PolicySearch>
                  <FilterField>
                    <FilterLabel>Filter by Type</FilterLabel>
                    <SelectBox>All types <SelectCaret $c="#545b64" $s={6} /></SelectBox>
                  </FilterField>
                  <Pager>
                    <PagerChevron><Chevron left s={22} /></PagerChevron>
                    <PagerNumber>1</PagerNumber>
                    <PagerChevron><Chevron s={22} /></PagerChevron>
                    <PagerDivider />
                    <PagerGear><GearIcon s={21} /></PagerGear>
                  </Pager>
                </FilterRow>
              </PolicyHead>
              <TableHead>
                <CheckCell><CheckBox /></CheckCell>
                <HeadCell $soft>
                  <HeadName>Policy name</HeadName>
                  <HeadExt><ExternalIcon s={18} /></HeadExt>
                  <SortMark>
                    <svg width="14" height="11" viewBox="0 0 14 11"><path d="M7 0l7 11H0z" fill="#16191f" /></svg>
                  </SortMark>
                </HeadCell>
                <HeadCell>
                  Type
                  <SortMark><FilterTriangle /></SortMark>
                </HeadCell>
                <HeadCell>
                  Attached entities
                  <SortMark><FilterTriangle /></SortMark>
                </HeadCell>
              </TableHead>
              <TableRow>
                <RowCheckCell><CheckBox /></RowCheckCell>
                <RowCell $pad={32}>
                  <ExpandMark>
                    <Ico s={18} sw={1.6}><rect x="1.5" y="1.5" width="13" height="13" /><path d="M8 5v6M5 8h6" /></Ico>
                  </ExpandMark>
                  <S3Mark><S3Icon /></S3Mark>
                  <RowLink>AmazonS3FullAccess</RowLink>
                </RowCell>
                <RowCell>AWS managed</RowCell>
                <RowCell>3</RowCell>
              </TableRow>
            </PolicyCard>
          </Main>

          <RightRail>
            <RailButton $ruled>
              <Ico s={20} sw={1.8}><circle cx="8" cy="8" r="6.8" /><path d="M8 7v5M6.5 12h3M6.800 7H8" /><path d="M8 4.2v.3" /></Ico>
            </RailButton>
            <RailButton>
              <Ico s={20} sw={2}><path d="M8 1.2l6 3.4v6.8l-6 3.4-6-3.4V4.6z" /><path d="M5.5 7A3 3 0 0 1 10 5.5M8 8.5l6 4" /></Ico>
            </RailButton>
          </RightRail>
        </Body>

        <Footer>
          <FooterShell><ShellIcon s={20} />CloudShell</FooterShell>
          <FooterLink $ml={31}>Feedback</FooterLink>
          <FooterEnd>
            <span>© 2024, Amazon Web Services, Inc. or its affiliates.</span>
            <FooterLink $ml={37}>Privacy</FooterLink>
            <FooterLink $ml={32}>Terms</FooterLink>
            <FooterLink $ml={32}>Cookie preferences</FooterLink>
          </FooterEnd>
        </Footer>
        <BottomLine />
      </Page>
      <PageScroll>
        <ScrollArrow $w={6} />
        <PageThumb />
        <ScrollArrow $down $w={6} />
      </PageScroll>
    </Viewport>
  </Screen>
);

export default App;
